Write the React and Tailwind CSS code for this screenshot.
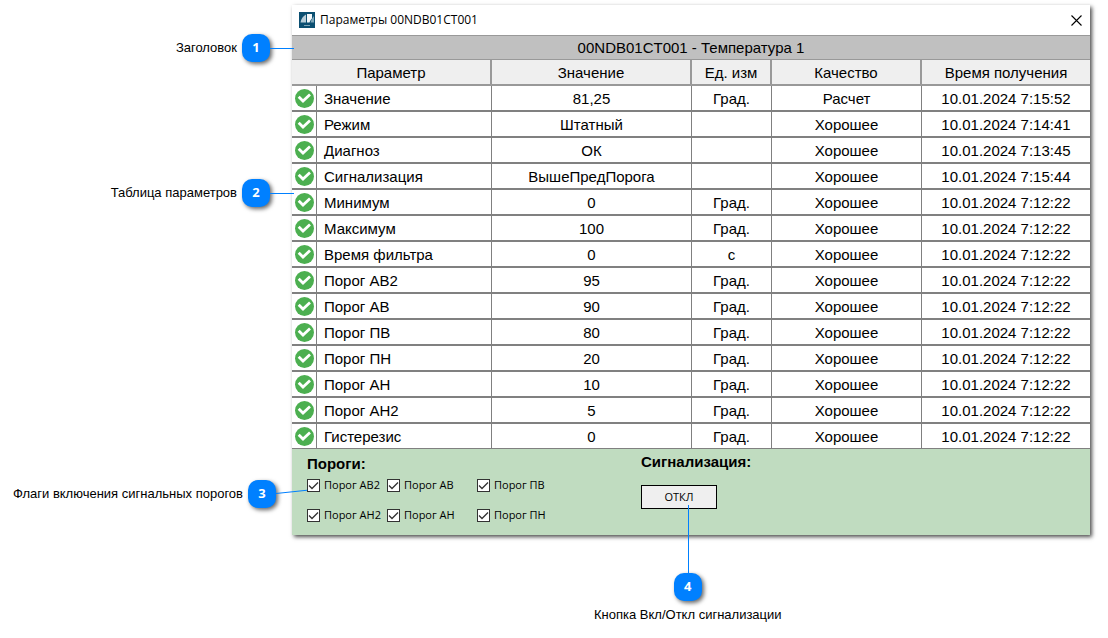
import clsx from "clsx";

const TABLE_FONT = "font-['Liberation_Sans',Arial,sans-serif]";
const UI_FONT = "font-['Open_Sans','Noto_Sans',sans-serif]";

const rows = [
    { name: "Значение", value: "81,25", unit: "Град.", quality: "Расчет", time: "10.01.2024 7:15:52" },
    { name: "Режим", value: "Штатный", unit: "", quality: "Хорошее", time: "10.01.2024 7:14:41" },
    { name: "Диагноз", value: "ОК", unit: "", quality: "Хорошее", time: "10.01.2024 7:13:45" },
    { name: "Сигнализация", value: "ВышеПредПорога", unit: "", quality: "Хорошее", time: "10.01.2024 7:15:44" },
    { name: "Минимум", value: "0", unit: "Град.", quality: "Хорошее", time: "10.01.2024 7:12:22" },
    { name: "Максимум", value: "100", unit: "Град.", quality: "Хорошее", time: "10.01.2024 7:12:22" },
    { name: "Время фильтра", value: "0", unit: "с", quality: "Хорошее", time: "10.01.2024 7:12:22" },
    { name: "Порог АВ2", value: "95", unit: "Град.", quality: "Хорошее", time: "10.01.2024 7:12:22" },
    { name: "Порог АВ", value: "90", unit: "Град.", quality: "Хорошее", time: "10.01.2024 7:12:22" },
    { name: "Порог ПВ", value: "80", unit: "Град.", quality: "Хорошее", time: "10.01.2024 7:12:22" },
    { name: "Порог ПН", value: "20", unit: "Град.", quality: "Хорошее", time: "10.01.2024 7:12:22" },
    { name: "Порог АН", value: "10", unit: "Град.", quality: "Хорошее", time: "10.01.2024 7:12:22" },
    { name: "Порог АН2", value: "5", unit: "Град.", quality: "Хорошее", time: "10.01.2024 7:12:22" },
    { name: "Гистерезис", value: "0", unit: "Град.", quality: "Хорошее", time: "10.01.2024 7:12:22" },
];

const thresholds = ["Порог АВ2", "Порог АВ", "Порог ПВ", "Порог АН2", "Порог АН", "Порог ПН"];

function AppLogo(){
    return(
        <svg width="16" height="16" viewBox="0 0 16 16" className="shrink-0" aria-hidden="true">
            <rect width="16" height="16" fill="#0b4f71"/>
            <path d="M7 2.5 V10.5 H1.5 C2 7 4 4 7 2.5 Z" fill="#b9ced8"/>
            <path d="M8 2 H13 V6.5 C12 7.5 11 9 10.5 10.5 H8 Z" fill="#f4f8fa"/>
            <path d="M15 4 V10.5 H11.5 C12 8 13.5 6 15 4 Z" fill="#7ea6b8"/>
            <rect x="5" y="13" width="6" height="1" fill="#7fa5b6"/>
        </svg>
    )
}

function OkIcon(){
    return(
        <svg width="20" height="20" viewBox="0 0 20 20" className="mx-auto block" role="img" aria-label="OK">
            <circle cx="10.5" cy="10.5" r="9.5" fill="#4caf50"/>
            <path d="M4.7 8.8 L9 13 L16 6.5" fill="none" stroke="#fff" strokeWidth="2.8"/>
        </svg>
    )
}

function Badge({ number, children }){
    return(
        <span className="relative flex size-7 shrink-0 items-center justify-center rounded-[10px] bg-[#0080ff] text-[13px] font-bold text-white shadow-[2px_2px_4px_rgba(0,0,0,0.6)]">
            <span className={UI_FONT}>{number}</span>
            {children}
        </span>
    )
}

function Callout({ number, text, className, children }){
    return(
        <div className={clsx("flex items-center gap-[5px] whitespace-nowrap", className)}>
            <span>{text}</span>
            <Badge number={number}>{children}</Badge>
        </div>
    )
}

function Threshold({ label }){
    return(
        <label className="flex items-center gap-1 whitespace-nowrap">
            <span className="relative size-[13px] shrink-0">
                <input type="checkbox" defaultChecked className="peer block size-[13px] appearance-none border border-[#333] bg-white"/>
                <svg viewBox="0 0 13 13" className="pointer-events-none absolute inset-0 hidden size-[13px] peer-checked:block" aria-hidden="true">
                    <path d="M2 6.5 L5 9.5 L11 3.5" fill="none" stroke="#333" strokeWidth="1.3"/>
                </svg>
            </span>
            {label}
        </label>
    )
}

function ParamsTable(){
    const th = "h-[26px] border-b-2 border-[#999] bg-[#efefef] px-0 pt-0.5 pb-0 font-normal"
    const td = "border-[#808080] p-0"
    const text = "pt-0.5"

    return(
        <table className="w-full table-fixed border-separate border-spacing-0 text-center text-[15px] leading-[22px]">
            <colgroup>
                <col className="w-[25px]"/>
                <col className="w-[175px]"/>
                <col className="w-[200px]"/>
                <col className="w-20"/>
                <col className="w-[150px]"/>
                <col/>
            </colgroup>
            <thead>
                <tr>
                    <th colSpan={2} className={clsx(th, "border-r-2")}>Параметр</th>
                    <th className={clsx(th, "border-r-2")}>Значение</th>
                    <th className={clsx(th, "border-r-2")}>Ед. изм</th>
                    <th className={clsx(th, "border-r-2")}>Качество</th>
                    <th className={th}>Время получения</th>
                </tr>
            </thead>
            <tbody>
                {
                    rows.map((row, i) => {
                        const cell = clsx(td, i === rows.length - 1 ? "border-b" : "border-b-2")
                        return(
                            <tr key={row.name}>
                                <td className={clsx(cell, "border-r")}><OkIcon/></td>
                                <td className={clsx(cell, "border-r text-left")}><div className={clsx(text, "pl-[7px]")}>{row.name}</div></td>
                                <td className={clsx(cell, "border-r")}><div className={text}>{row.value}</div></td>
                                <td className={clsx(cell, "border-r")}><div className={text}>{row.unit}</div></td>
                                <td className={clsx(cell, "border-r")}><div className={text}>{row.quality}</div></td>
                                <td className={cell}><div className={text}>{row.time}</div></td>
                            </tr>
                        )
                    })
                }
            </tbody>
        </table>
    )
}

function ParamsWindow(){
    return(
        <section className="bg-white shadow-[2px_2px_4px_rgba(0,0,0,0.7)]">
            <header className={clsx("flex h-[30px] items-center gap-[5px] pr-2 pl-[7px] text-xs", UI_FONT)}>
                <AppLogo/>
                <span>Параметры 00NDB01CT001</span>
                <button type="button" aria-label="Закрыть" className="ml-auto">
                    <svg width="11" height="11" viewBox="0 0 11 11" className="block" aria-hidden="true">
                        <path d="M0.5 0.5 L10.5 10.5 M10.5 0.5 L0.5 10.5" stroke="#000" strokeWidth="1.1"/>
                    </svg>
                </button>
            </header>

            <h1 className="border-y border-[#999] bg-[#c0c0c0] text-center text-[15px] leading-[23px]">
                00NDB01CT001 - Температура 1
            </h1>

            <ParamsTable/>

            <div className="flex h-[86px] bg-[#c0dcc0] pl-[15px]">
                <fieldset className="w-[334px] shrink-0">
                    <legend className="pt-1.5 text-[15px] leading-[18px] font-bold">Пороги:</legend>
                    <div className={clsx("mt-1 grid grid-cols-[80px_90px_1fr] gap-y-[14px] text-[11px] leading-4", UI_FONT)}>
                        {thresholds.map((label) => <Threshold key={label} label={label}/>)}
                    </div>
                </fieldset>
                <div>
                    <h2 className="pt-1 text-[15px] leading-[18px] font-bold">Сигнализация:</h2>
                    <button type="button" className={clsx("mt-[14px] block h-6 w-[76px] border border-black bg-[#efefef] text-[11px]", UI_FONT)}>
                        ОТКЛ
                    </button>
                </div>
            </div>
        </section>
    )
}

export default function App(){
    return(
        <main className={clsx("flex min-h-dvh bg-white pt-[5px] text-[13px] text-black", TABLE_FONT)}>
            <aside className="flex w-[292px] shrink-0 flex-col items-end pt-[29px]">
                <Callout number={1} text="Заголовок" className="mr-[22px]">
                    <span className="absolute top-[14px] left-full h-px w-6 bg-[#0080ff]"/>
                </Callout>
                <Callout number={2} text="Таблица параметров" className="mt-[117px] mr-[22px]">
                    <span className="absolute top-[14px] left-full h-px w-6 bg-[#0080ff]"/>
                </Callout>
                <Callout number={3} text="Флаги включения сигнальных порогов" className="mt-[273px] mr-4">
                    <svg width="38" height="8" viewBox="0 0 38 8" className="absolute top-[8px] left-full" aria-hidden="true">
                        <path d="M0 5.5 L38 1.5" stroke="#0080ff" strokeWidth="1"/>
                    </svg>
                </Callout>
            </aside>

            <div className="mr-[18px] flex min-w-0 flex-1 flex-col">
                <ParamsWindow/>

                <div className="mt-[38px] ml-[302px] flex flex-col items-center gap-1 self-start whitespace-nowrap">
                    <Badge number={4}>
                        <span className="absolute bottom-full left-[14px] h-[68px] w-px bg-[#0080ff]"/>
                    </Badge>
                    <span>Кнопка Вкл/Откл сигнализации</span>
                </div>
            </div>
        </main>
    )
}
